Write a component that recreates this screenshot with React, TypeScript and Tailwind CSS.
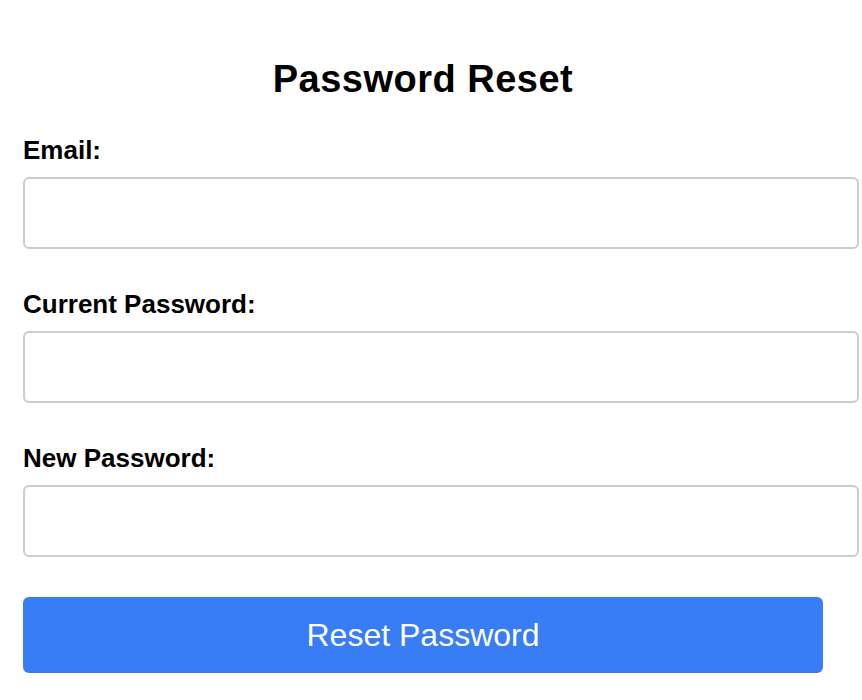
import React from "react";

export default function App() {
  const fields = ["Email:", "Current Password:", "New Password:"];
  return (
    <div className="min-h-[700px] w-[862px] bg-white text-black" style={{ fontFamily: '"Liberation Sans", Arial, Helvetica, sans-serif' }}>
      <div className="w-[800px] ml-[23px] pt-[59px] flex flex-col">
        <h2 className="text-center text-[38px] leading-[40px] font-bold tracking-[0.5px] mb-[36px]">Password Reset</h2>
        <form className="flex flex-col" onSubmit={(e) => e.preventDefault()}>
          {fields.map((f) => (
            <div key={f} className="flex flex-col mb-[40px]">
              <label className="text-[26px] leading-[30px] font-bold mb-[12px]">{f}</label>
              <input
                type={f === "Email:" ? "email" : "password"}
                className="box-border w-[836px] h-[72px] border-2 border-[#cccccc] rounded-[6px] px-4 text-[24px] outline-none"
              />
            </div>
          ))}
          <button
            type="submit"
            className="w-[800px] h-[76px] rounded-[6px] bg-[#387cf6] text-white text-[32px] leading-[36px] font-normal"
          >
            Reset Password
          </button>
        </form>
      </div>
    </div>
  );
}
